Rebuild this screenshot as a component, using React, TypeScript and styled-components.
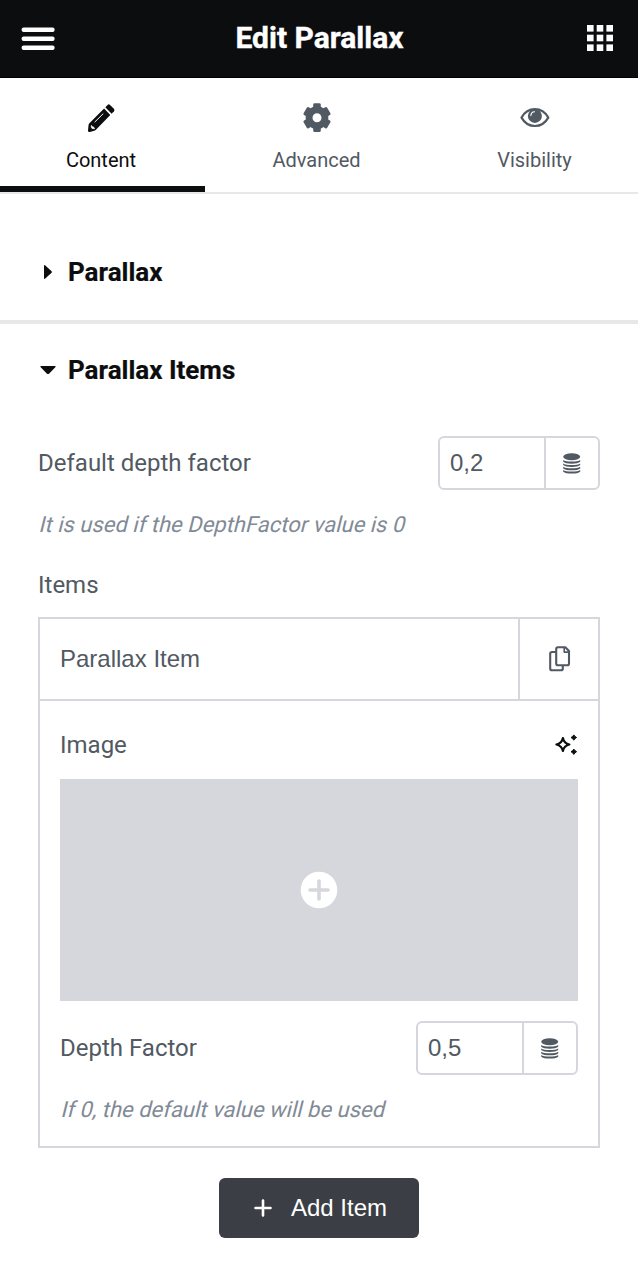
import React from "react";
import styled, { createGlobalStyle } from "styled-components";

const GlobalStyle = createGlobalStyle`
  * { box-sizing: border-box; }
  body { margin: 0; background: #fff; font-family: Roboto, "Liberation Sans", sans-serif; color: #515962; }
  button, input { font: inherit; color: inherit; background: none; border: 0; padding: 0; margin: 0; }
  svg { display: block; flex: none; }
`;

const Panel = styled.div`
  width: 638px;
  height: 1266px;
  overflow: hidden;
  background: #fff;
`;

const Header = styled.header`
  height: 78px;
  padding: 0 25px 1px 21px;
  display: flex;
  align-items: center;
  justify-content: space-between;
  background: #0c0d0e;
  border-bottom: 1px solid #000;
  color: #fff;
`;

const Title = styled.h1`
  margin: 0 3px 1px 0;
  font-size: 30px;
  line-height: 36px;
  font-weight: 700;
  -webkit-text-stroke: 0.4px currentColor;
`;

const Tabs = styled.nav`
  display: flex;
  height: 116px;
  border-bottom: 2px solid #e6e8ea;
`;

const Tab = styled.button<{ $width: number; $active?: boolean; $pad?: string }>`
  width: ${(p) => p.$width}px;
  height: 114px;
  padding: ${(p) => p.$pad ?? "0"};
  display: flex;
  flex-direction: column;
  align-items: center;
  border-bottom: 6px solid ${(p) => (p.$active ? "#0c0d0e" : "transparent")};
  color: ${(p) => (p.$active ? "#0c0d0e" : "#515962")};
  font-size: 20px;
  line-height: 24px;
  svg { margin: 24px 0 16px; }
`;

const SectionHead = styled.div<{ $top: number; $bottom: number }>`
  display: flex;
  align-items: center;
  gap: 10px;
  padding: ${(p) => p.$top}px 38px ${(p) => p.$bottom}px 38px;
  color: #0c0d0e;
`;

const SectionTitle = styled.h2`
  margin: 0;
  font-size: 26px;
  line-height: 30px;
  font-weight: 700;
  -webkit-text-stroke: 0.2px currentColor;
`;

const Divider = styled.div`
  height: 4px;
  background: #e6e8ea;
`;

const Controls = styled.div`
  padding: 0 38px;
`;

const Field = styled.div`
  height: 54px;
  display: flex;
  align-items: center;
  justify-content: space-between;
`;

const Label = styled.label`
  font-size: 24px;
  line-height: 28px;
`;

const NumberGroup = styled.div`
  width: 162px;
  height: 54px;
  display: flex;
  border: 2px solid #d6d7dc;
  border-radius: 6px;
`;

const NumberInput = styled.input`
  width: 106px;
  height: 50px;
  padding: 0 10px;
  border-right: 2px solid #d6d7dc;
  font-family: "Liberation Sans", Arial, sans-serif;
  font-size: 24px;
`;

const IconButton = styled.button<{ $shift?: number }>`
  flex: 1;
  padding-left: ${(p) => p.$shift ?? 0}px;
  display: flex;
  align-items: center;
  justify-content: center;
`;

/* Slants the upright face, whose spacing is wider than the true italic's. */
const Hint = styled.p`
  margin: 22px 0 0;
  font-size: 22px;
  line-height: 26px;
  color: #818a96;
  transform: skewX(-14deg);
  transform-origin: 0 21px;
`;

const ItemsLabel = styled.div`
  margin-top: 33px;
  font-size: 24px;
  line-height: 28px;
`;

const Repeater = styled.div`
  margin-top: 18px;
  height: 531px;
  border: 2px solid #d6d7dc;
`;

const ItemHead = styled.div`
  height: 82px;
  display: flex;
  border-bottom: 2px solid #d6d7dc;
`;

const ItemTitle = styled.button`
  width: 480px;
  padding-left: 20px;
  border-right: 2px solid #d6d7dc;
  text-align: left;
  font-family: "Liberation Sans", Arial, sans-serif;
  font-size: 24px;
`;

const ItemBody = styled.div`
  padding: 30px 20px 0;
`;

const ImageRow = styled.div`
  height: 28px;
  display: flex;
  align-items: center;
  justify-content: space-between;
  color: #0c0d0e;
  label { color: #515962; }
`;

const Preview = styled.div`
  height: 222px;
  margin: 20px 0;
  display: flex;
  align-items: center;
  justify-content: center;
  background: #d6d7dc;
`;

const AddButton = styled.button`
  width: 200px;
  height: 60px;
  margin: 30px auto 0;
  padding-left: 3px;
  display: flex;
  align-items: center;
  justify-content: center;
  gap: 19px;
  border-radius: 6px;
  background: #3b3f45;
  color: #fff;
  font-family: "Liberation Sans", Arial, sans-serif;
  font-size: 24px;
`;

const MenuIcon = () => (
  <svg width="34" height="24" viewBox="0 0 34 24" fill="currentColor">
    {[1.4, 10.4, 19.4].map((y) => <rect key={y} x="0.6" y={y} width="33" height="4.6" rx="2" />)}
  </svg>
);

const GridIcon = () => (
  <svg width="26" height="26" viewBox="0 0 26 26" fill="currentColor">
    {[0, 9.7, 19.4].map((y) => [0, 9.7, 19.4].map((x) => (
      <rect key={`${x}-${y}`} x={x} y={y} width="6.6" height="6.6" />
    )))}
  </svg>
);

const PencilIcon = () => (
  <svg width="30" height="30" viewBox="0 0 30 30" fill="none">
    <path fill="currentColor" d="M19.300 5.300 21.600 2.900Q22.800 1.800 24 2.900L27.900 6.800Q29 8 28 9.200L25.600 11.700Z" />
    <path fill="currentColor" d="M18.100 6.600 24.300 12.900 10.900 26.700Q9.800 28 8.300 28.800L3.800 30Q1.900 30.300 2 28.400L2.500 23.200Q2.600 22 3.400 21.200Z" />
    <path d="M8.900 19.900 17 11.900" stroke="#fff" strokeWidth="1" strokeLinecap="round" />
    <path d="M5.300 23.300V25.200Q5.500 26.600 7 26.700H8.700L7.800 25.200Q6.100 25 5.300 23.300Z" fill="#fff" stroke="#fff" strokeWidth=".6" />
  </svg>
);

const GearIcon = () => (
  <svg width="30" height="30" viewBox="0 0 30 30" fill="currentColor">
    <path fillRule="evenodd" d="M11.200 2.600Q11.400 1.300 12.600 1.300H17.400Q18.600 1.300 18.800 2.600V4.800Q20.200 5.400 21.300 6.300L23.300 5.200Q24.500 4.600 25.200 5.700L28.400 11.200Q29 12.300 27.900 13L26.200 14Q26.500 15.800 26.200 17.400L27.900 18.400Q29 19.100 28.400 20.200L25.200 25.700Q24.500 26.800 23.300 26.200L21.300 25Q20.200 26 18.800 26.600V28.700Q18.600 30 17.400 30H12.600Q11.400 30 11.200 28.700V26.600Q9.800 26 8.700 25L6.700 26.200Q5.500 26.800 4.800 25.700L1.600 20.200Q1 19.100 2.100 18.400L3.800 17.400Q3.500 15.800 3.800 14L2.100 13Q1 12.300 1.600 11.200L4.800 5.700Q5.500 4.600 6.700 5.200L8.700 6.300Q9.800 5.400 11.200 4.800ZM15 11.200A4.500 4.500 0 1 0 15 20.200A4.500 4.500 0 1 0 15 11.200Z" />
  </svg>
);

const EyeIcon = () => (
  <svg width="30" height="30" viewBox="0 0 30 30" fill="none">
    <path d="M1.500 15.600C4.500 10.300 9.500 7.200 14.900 7.200S25.300 10.300 28.300 15.600C25.300 20.900 20.300 24 14.900 24S4.500 20.900 1.500 15.600Z" stroke="currentColor" strokeWidth="2.200" strokeLinejoin="round" />
    <circle cx="14.900" cy="13.900" r="7" fill="currentColor" />
    <path d="M10.900 13.600Q11 9.900 14.500 9.700" stroke="#fff" strokeWidth="1.100" strokeLinecap="round" />
  </svg>
);

const DatabaseIcon = () => (
  <svg width="18" height="21" viewBox="0 0 18 21" fill="currentColor">
    <ellipse cx="8.700" cy="3.800" rx="8.500" ry="3.500" />
    {[7.100, 10.400, 13.700, 17].map((y) => (
      <path key={y} transform={`translate(0 ${y})`} d="M.2 0C2.500 2 14.900 2 17.200 0V1.700C14.900 4.200 2.500 4.200 .2 1.700Z" />
    ))}
  </svg>
);

const CopyIcon = () => (
  <svg width="22" height="26" viewBox="0 0 22 26" fill="none" stroke="currentColor" strokeWidth="2.100" strokeLinejoin="round">
    <path d="M7 6H3Q1.200 6 1.200 7.800V22.500Q1.200 24.300 3 24.300H12Q13.800 24.300 13.800 22.500V19.500" />
    <path d="M9 1.200H16.300L20 4.900V17.500Q20 19.300 18.200 19.300H9Q7.200 19.300 7.200 17.500V3Q7.200 1.200 9 1.200Z" />
    <path d="M15.200 1.500V6.100H20" strokeWidth="1.600" />
  </svg>
);

const SparkleIcon = () => (
  <svg width="24" height="22" viewBox="0 0 24 22" fill="currentColor">
    <path d="M8.900 4Q10 9.400 15.400 10.500 10 11.600 8.900 17 7.800 11.600 2.400 10.500 7.800 9.400 8.900 4Z" fill="none" stroke="currentColor" strokeWidth="2.200" strokeLinejoin="round" />
    <path d="M19.800 .9Q20.700 2.700 22.600 3.500 20.700 4.400 19.800 6.200 18.900 4.400 17 3.500 18.900 2.700 19.800 .9ZM19.800 15.100Q20.700 16.900 22.600 17.700 20.700 18.600 19.800 20.400 18.900 18.600 17 17.700 18.900 16.900 19.800 15.100Z" stroke="currentColor" strokeWidth="1" strokeLinejoin="round" />
  </svg>
);

const PlusCircleIcon = () => (
  <svg width="38" height="38" viewBox="0 0 38 38">
    <circle cx="19" cy="19" r="18.300" fill="#fff" />
    <path d="M19 10V28M10 19H28" stroke="#d6d7dc" strokeWidth="3.600" strokeLinecap="round" />
  </svg>
);

const PlusIcon = () => (
  <svg width="18" height="18" viewBox="0 0 18 18" fill="none" stroke="currentColor" strokeWidth="2.600" strokeLinecap="round">
    <path d="M9 1.500V16.500M1.500 9H16.500" />
  </svg>
);

const Arrow = ({ open }: { open?: boolean }) => (
  <svg width="20" height="20" viewBox="0 0 20 20" fill="currentColor">
    <path d={open ? "M3 6.100H17Q18.300 6.300 17.300 7.300L11 13.700Q10 14.500 9 13.700L2.700 7.300Q1.700 6.300 3 6.100Z" : "M6 3.800Q6.100 2.500 7.300 3.400L13.600 9.300Q14.200 10 13.600 10.700L7.300 16.600Q6.100 17.500 6 16.200Z"} />
  </svg>
);

const NumberControl = ({ value }: { value: string }) => (
  <NumberGroup>
    <NumberInput defaultValue={value} />
    <IconButton aria-label="Dynamic"><DatabaseIcon /></IconButton>
  </NumberGroup>
);

export default function App() {
  return (
    <>
      <GlobalStyle />
      <Panel>
        <Header>
          <MenuIcon />
          <Title>Edit Parallax</Title>
          <GridIcon />
        </Header>
        <Tabs>
          <Tab $width={205} $pad="0 3px 0 0" $active><PencilIcon />Content</Tab>
          <Tab $width={223}><GearIcon />Advanced</Tab>
          <Tab $width={210} $pad="0 0 0 3px"><EyeIcon />Visibility</Tab>
        </Tabs>
        <SectionHead $top={63} $bottom={33}><Arrow /><SectionTitle>Parallax</SectionTitle></SectionHead>
        <Divider />
        <SectionHead $top={31} $bottom={51}><Arrow open /><SectionTitle>Parallax Items</SectionTitle></SectionHead>
        <Controls>
          <Field><Label>Default depth factor</Label><NumberControl value="0,2" /></Field>
          <Hint>It is used if the DepthFactor value is 0</Hint>
          <ItemsLabel>Items</ItemsLabel>
          <Repeater>
            <ItemHead>
              <ItemTitle>Parallax Item</ItemTitle>
              <IconButton $shift={2} aria-label="Duplicate"><CopyIcon /></IconButton>
            </ItemHead>
            <ItemBody>
              <ImageRow><Label>Image</Label><SparkleIcon /></ImageRow>
              <Preview><PlusCircleIcon /></Preview>
              <Field><Label>Depth Factor</Label><NumberControl value="0,5" /></Field>
              <Hint>If 0, the default value will be used</Hint>
            </ItemBody>
          </Repeater>
          <AddButton><PlusIcon />Add Item</AddButton>
        </Controls>
      </Panel>
    </>
  );
}
